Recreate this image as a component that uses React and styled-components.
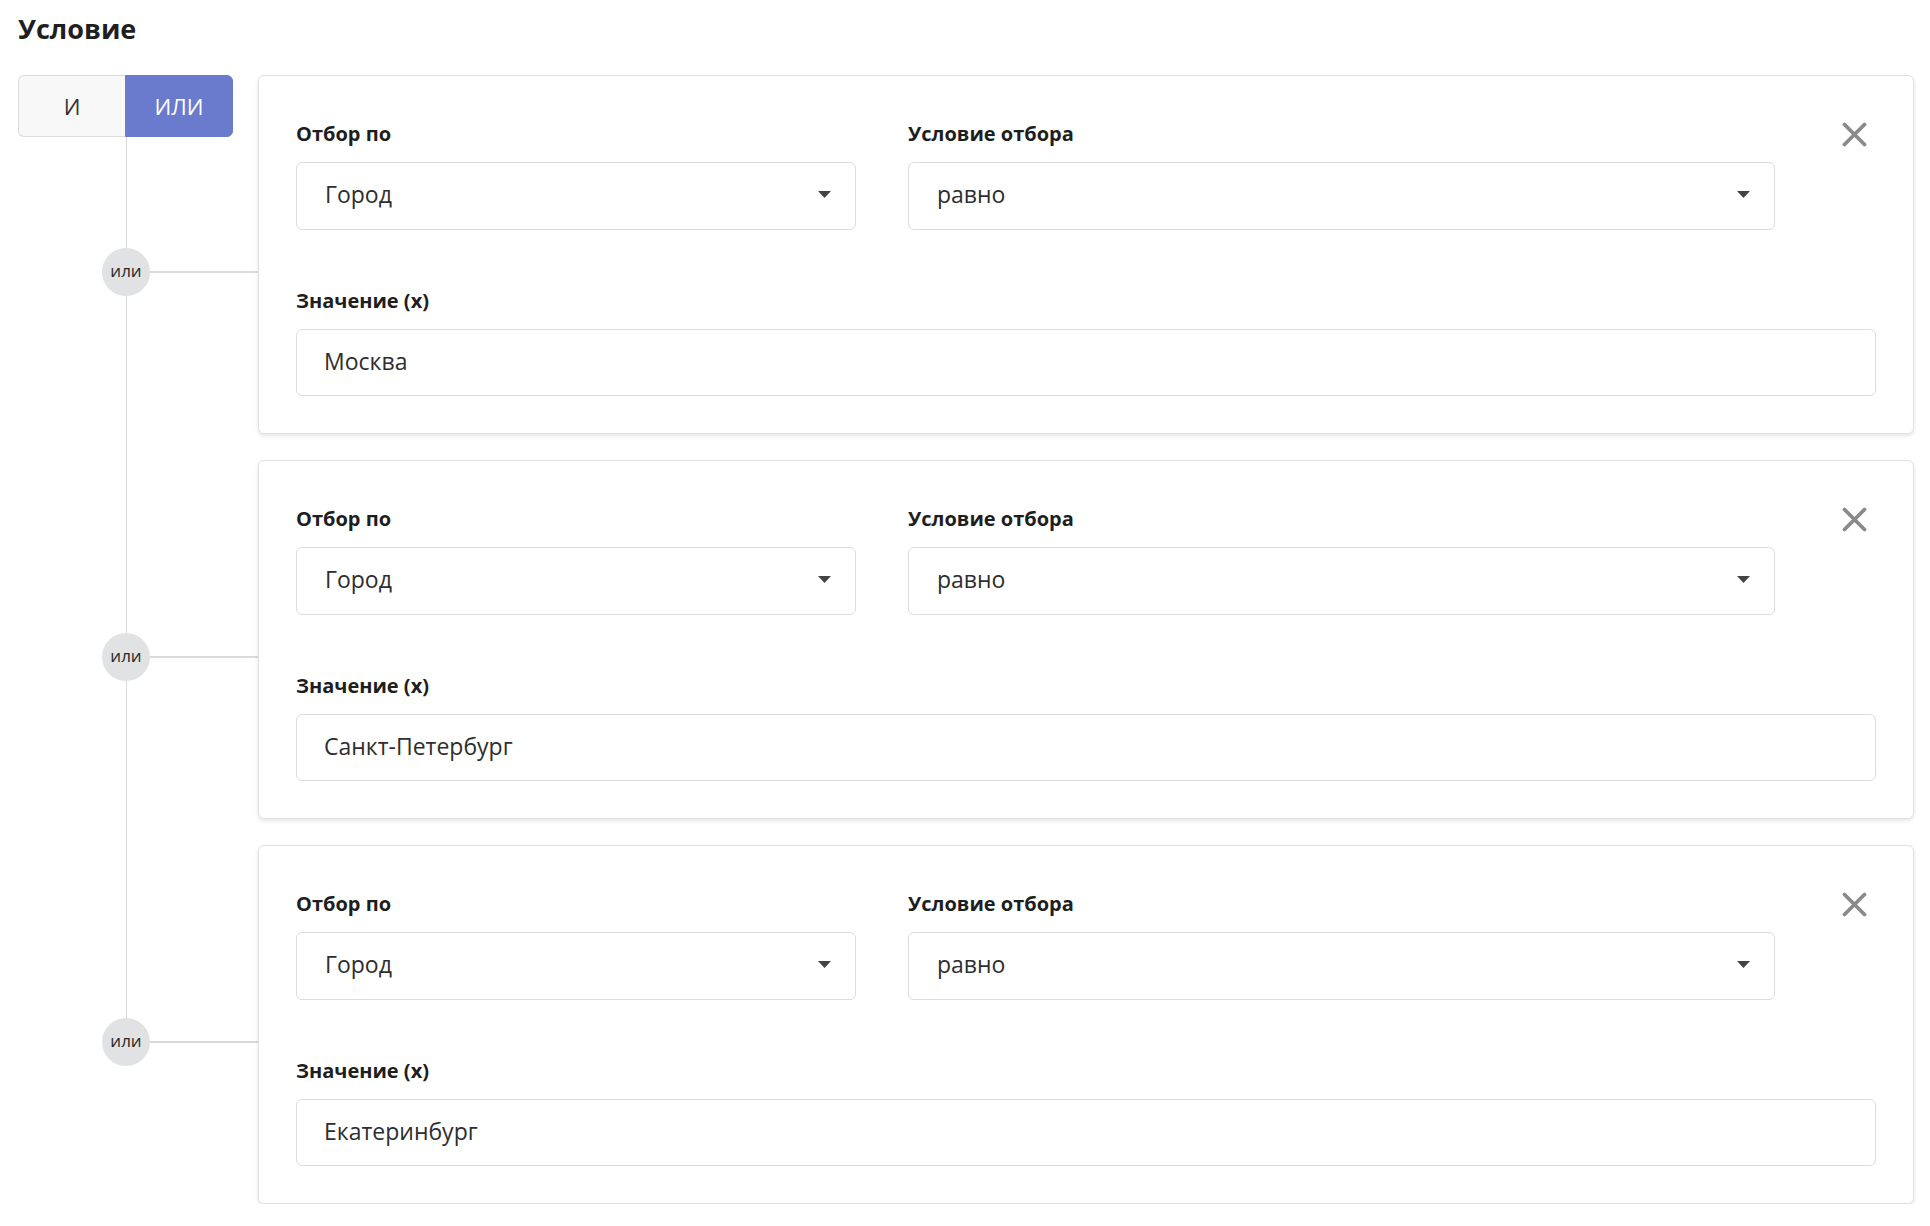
import React from "react";
import styled, { createGlobalStyle } from "styled-components";

const GlobalStyle = createGlobalStyle`
  html, body { margin: 0; padding: 0; background: #ffffff; }
  body { font-family: "Open Sans", "Noto Sans", Arial, sans-serif; color: #222; }
  * { box-sizing: border-box; }
`;

const Page = styled.div`
  padding: 11px 16px 0 18px;
`;

const Title = styled.h2`
  margin: 0;
  font-size: 27px;
  font-weight: 700;
  line-height: 1.362;
  color: #1f1f1f;
`;

const Tree = styled.div`
  margin-top: 27px;
  display: flex;
  flex-direction: column;
`;

const Row = styled.div`
  display: grid;
  grid-template-columns: 240px 1fr;
`;

const Rail = styled.div`
  display: flex;
  flex-direction: column;
`;

const Toggle = styled.div`
  display: flex;
  width: 215px;
  height: 62px;
`;

const ToggleBtn = styled.button`
  flex: 1;
  border: 1px solid ${(p) => (p.$active ? "#6a7acc" : "#dcdcdc")};
  background: ${(p) => (p.$active ? "#6a7acc" : "#f8f8f8")};
  color: ${(p) => (p.$active ? "#ffffff" : "#333")};
  font-family: inherit;
  font-size: 22px;
  padding: 0;
  border-radius: ${(p) => (p.$first ? "6px 0 0 6px" : "0 6px 6px 0")};
  ${(p) => (p.$first ? "border-right: none;" : "")}
`;

const VSeg = styled.div`
  margin-left: 108px;
  width: 1px;
  height: ${(p) => (p.$h ? `${p.$h}px` : "auto")};
  flex: ${(p) => (p.$h ? "none" : "1")};
  background: ${(p) => (p.$hidden ? "transparent" : "#dadada")};
`;

const Node = styled.div`
  display: flex;
  align-items: center;
  padding-left: 84px;
`;

const Circle = styled.div`
  width: 48px;
  height: 48px;
  flex: none;
  border-radius: 50%;
  background: #e1e2e4;
  color: #2a2a2a;
  font-size: 17px;
  display: flex;
  align-items: center;
  justify-content: center;
  line-height: 1;
  padding-bottom: 2px;
`;

const HLine = styled.div`
  flex: 1;
  height: 2px;
  background: #dadada;
`;

const CardCell = styled.div`
  padding-bottom: ${(p) => (p.$last ? "0" : "26px")};
`;

const Card = styled.div`
  border: 1px solid #e0e0e0;
  border-radius: 6px;
  box-shadow: 0 2px 4px rgba(0, 0, 0, 0.1);
  background: #fff;
  padding: 37px;
`;

const TopRow = styled.div`
  display: grid;
  grid-template-columns: 560px 867px 1fr;
  column-gap: 52px;
  align-items: start;
`;

const Field = styled.div`
  padding-top: ${(p) => (p.$offset ? `${p.$offset}px` : "0")};
  display: flex;
  flex-direction: column;
`;

const Label = styled.div`
  font-size: 20px;
  font-weight: 700;
  line-height: 28px;
  color: #1e1e1e;
  margin-bottom: 14px;
`;

const Select = styled.div`
  height: 68px;
  border: 1px solid #dcdcdc;
  border-radius: 6px;
  display: flex;
  align-items: center;
  justify-content: space-between;
  padding: 0 24px 3px 28px;
  font-size: 23px;
  color: #2e2e2e;
`;

const Input = styled.div`
  height: 67px;
  border: 1px solid #dcdcdc;
  border-radius: 6px;
  display: flex;
  align-items: center;
  padding: 0 27px 3px;
  font-size: 23px;
  color: #2e2e2e;
`;

const Close = styled.button`
  justify-self: end;
  width: 44px;
  height: 44px;
  border: none;
  background: transparent;
  padding: 0;
  display: flex;
  align-items: center;
  justify-content: center;
`;

const Caret = () => (
  <svg width="13" height="7" viewBox="0 0 13 7">
    <path d="M0 0 L13 0 L6.5 7 Z" fill="#444" />
  </svg>
);

const XIcon = () => (
  <svg width="25" height="25" viewBox="0 0 25 25">
    <path d="M2.5 2.5 L22.5 22.5 M22.5 2.5 L2.5 22.5" stroke="#8a8a8a" strokeWidth="3.8" strokeLinecap="round" />
  </svg>
);

const rows = ["Москва", "Санкт-Петербург", "Екатеринбург"];

export default function App() {
  return (
    <>
      <GlobalStyle />
      <Page>
        <Title>Условие</Title>
        <Tree>
          {rows.map((city, i) => {
            const last = i === rows.length - 1;
            return (
              <Row key={city}>
                <Rail>
                  {i === 0 && (
                    <Toggle>
                      <ToggleBtn $first>И</ToggleBtn>
                      <ToggleBtn $active>ИЛИ</ToggleBtn>
                    </Toggle>
                  )}
                  <VSeg $h={i === 0 ? 111 : 173} />
                  <Node>
                    <Circle>или</Circle>
                    <HLine />
                  </Node>
                  <VSeg $hidden={last} />
                </Rail>
                <CardCell $last={last}>
                  <Card>
                    <TopRow>
                      <Field $offset={7}>
                        <Label>Отбор по</Label>
                        <Select>
                          <span>Город</span>
                          <Caret />
                        </Select>
                      </Field>
                      <Field $offset={7}>
                        <Label>Условие отбора</Label>
                        <Select>
                          <span>равно</span>
                          <Caret />
                        </Select>
                      </Field>
                      <Close aria-label="Удалить">
                        <XIcon />
                      </Close>
                    </TopRow>
                    <Field $offset={57}>
                      <Label>Значение (x)</Label>
                      <Input>{city}</Input>
                    </Field>
                  </Card>
                </CardCell>
              </Row>
            );
          })}
        </Tree>
      </Page>
    </>
  );
}
